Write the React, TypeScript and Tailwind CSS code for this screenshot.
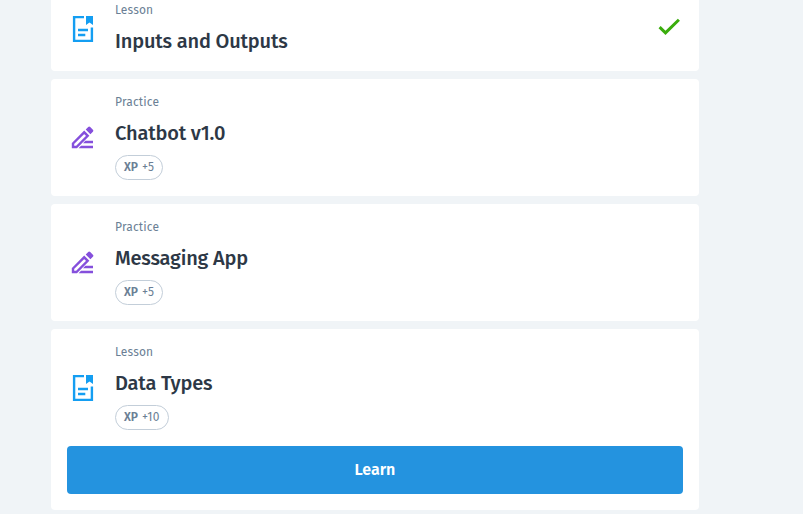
function LessonIcon() {
  return (
    <svg className="h-8 w-8" viewBox="0 0 32 32" fill="none">
      <path d="M17 4.1H7.1V27.9H24.9V14.5" stroke="#149ef2" strokeWidth="2.4" />
      <path d="M19 3H26V12L22.5 9.5L19 12Z" fill="#149ef2" />
      <path d="M11 17H21M11 22H18.3" stroke="#149ef2" strokeWidth="2.4" />
    </svg>
  );
}

function PracticeIcon() {
  return (
    <svg className="h-8 w-8" viewBox="0 0 32 32" fill="none">
      <path d="M6 21.5L17.2 10.3L20.7 13.8L9.5 25H6Z" stroke="#854fdc" strokeWidth="2.4" />
      <path d="M18.7 7.6L21.2 5.1Q22.2 4.1 23.2 5.1L25.9 7.8Q26.9 8.8 25.9 9.8L23.4 12.3Z" fill="#854fdc" />
      <path d="M18.4 18.8H26V21.2H16ZM14 23.8H26V26.2H11.6Z" fill="#854fdc" />
    </svg>
  );
}

interface ItemProps {
  kind: "Lesson" | "Practice";
  title: string;
  xp?: string;
  done?: boolean;
  action?: string;
}

function Item({ kind, title, xp, done, action }: ItemProps) {
  return (
    <section className="rounded-[4px] bg-white">
      <div className="flex items-center px-4 py-4">
        {kind === "Lesson" ? <LessonIcon /> : <PracticeIcon />}
        <div className="ml-4 flex-1">
          <div className="h-4 text-[12px] leading-[14px] tracking-[0.15px] text-[#6b7f95]">{kind}</div>
          <h2 className="mt-2 h-7 whitespace-nowrap text-[20px] leading-7 font-medium tracking-[-0.18px] text-[#2d3846]">
            {title}
          </h2>
          {xp && (
            <div className="mt-2 flex h-[25px] w-fit items-center gap-1 rounded-full border border-[#c3ced9] px-2 pb-0.5 text-[12px] leading-none text-[#6b7f95]">
              <span className="font-semibold">XP</span>
              <span className="tracking-[0.15px]">{xp}</span>
            </div>
          )}
        </div>
        {done && (
          <svg className="mb-1.5 h-8 w-8 translate-x-[2px]" viewBox="0 0 32 32" fill="none">
            <path d="M6.6 17.1L12.5 22.9L25.9 9.7" stroke="#3aad0c" strokeWidth="3" />
          </svg>
        )}
      </div>
      {action && (
        <div className="px-4 pb-4">
          <button className="flex h-12 w-full items-center justify-center rounded-[4px] bg-[#2493df] text-[16px] font-semibold text-white">
            {action}
          </button>
        </div>
      )}
    </section>
  );
}

export default function App() {
  return (
    <main className="h-[514px] overflow-hidden bg-[#f0f4f7] font-['Fira_Sans','Noto_Sans',sans-serif]">
      <div className="ml-[51px] -mt-[13px] flex w-[648px] flex-col gap-2">
        <Item kind="Lesson" title="Inputs and Outputs" done />
        <Item kind="Practice" title="Chatbot v1.0" xp="+5" />
        <Item kind="Practice" title="Messaging App" xp="+5" />
        <Item kind="Lesson" title="Data Types" xp="+10" action="Learn" />
      </div>
    </main>
  );
}
